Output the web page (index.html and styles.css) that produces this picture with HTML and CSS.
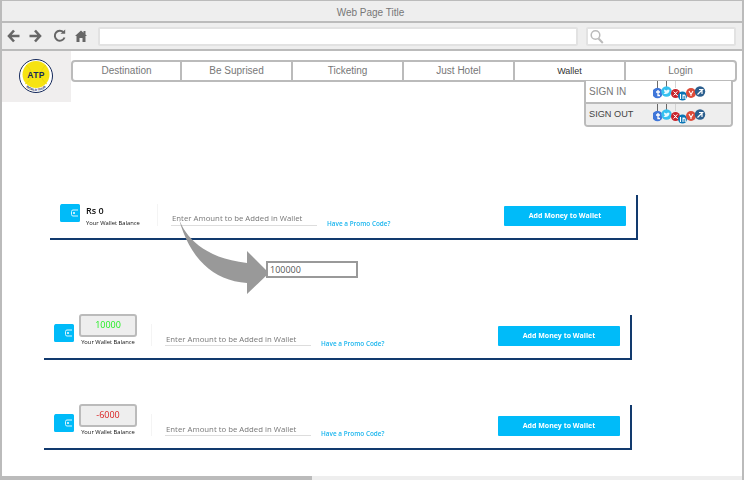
FILE: index.html
```html
<!DOCTYPE html>
<html lang="en">
<head>
<meta charset="utf-8">
<title>Web Page Title</title>
<link rel="stylesheet" href="styles.css">
</head>
<body>
<svg class="defs" width="0" height="0" aria-hidden="true">
  <defs>
    <symbol id="wallet" viewBox="0 0 20 18">
      <path d="M1.500 0H18.500A1.500 1.500 0 0 1 20 1.500V16.500A1.500 1.500 0 0 1 18.500 18H1.500A1.500 1.500 0 0 1 0 16.500V3A3 3 0 0 1 1.500 0Z" fill="#00bbf9"/>
      <path d="M18 6H13A1.500 1.500 0 0 0 11.500 7.500V10.500A1.500 1.500 0 0 0 13 12H18" fill="none" stroke="#d8f5ff" stroke-width="1"/>
      <circle cx="14" cy="9" r="1" fill="#fff"/>
    </symbol>
    <symbol id="social" viewBox="0 0 54 24">
      <path d="M4.500 0V8M13.500 0V7" stroke="#444" stroke-width=".8"/>
      <path d="M22.500 0V7" stroke="#ccc" stroke-width=".8"/>
      <circle cx="4.500" cy="12" r="5.200" fill="#3f76d9"/>
      <path d="M5 9V14.500H7M3 11H7" stroke="#fff" stroke-width="1.300" fill="none"/>
      <circle cx="13.500" cy="10.500" r="5.200" fill="#35c1f0"/>
      <path d="M10.500 12.500C13 14 16.500 12.500 16.500 9L15 8.500L13.500 9.500L11 8.500C11 10 11.500 11 12 11.500Z" fill="#e8f9ff"/>
      <circle cx="22.500" cy="12.500" r="4.500" fill="#c9252d"/>
      <path d="M20.500 10.500L24.500 14.500M24.500 10.500L22 12.500L24.500 14.500M20.500 14.500L23 12" stroke="#fff" stroke-width="1" fill="none"/>
      <circle cx="29.500" cy="15" r="4.500" fill="#0a75b5"/>
      <path d="M27.500 13V18M30 18V13.500M30 15C31 13.500 32.200 14 32.200 15.500V18" stroke="#fff" stroke-width="1.100" fill="none"/>
      <circle cx="38" cy="12" r="5" fill="#dd4b39"/>
      <path d="M36 10L38 13.500L40 10M38 13.500V15" stroke="#fff" stroke-width="1.100" fill="none"/>
      <circle cx="47" cy="10.500" r="5.200" fill="#2c5f8e"/>
      <path d="M44.500 13.500L49.500 8.500H46M49 8.500V13" stroke="#fff" stroke-width="1.200" fill="none"/>
    </symbol>
  </defs>
</svg>

<div class="frame">
  <header class="titlebar">Web Page Title</header>

  <div class="toolbar">
    <svg class="tool-icons" width="82" height="16" viewBox="0 0 82 16" aria-hidden="true">
      <path d="M7 2.500L2 8L7 13.500M2.500 8H12.500" fill="none" stroke="#666" stroke-width="2.600"/>
      <path d="M28 2.500L33 8L28 13.500M32.500 8H22.500" fill="none" stroke="#666" stroke-width="2.600"/>
      <path d="M56.500 4.300A5 5 0 1 0 57.500 9.500" fill="none" stroke="#666" stroke-width="2"/>
      <path d="M53.500 5.800H58.200V1.500Z" fill="#666"/>
      <path d="M68 8L74 2.500L76.500 4.800V3H78.500V6.600L80 8H78.500V14H75.500V10H72.500V14H69.500V8Z" fill="#666"/>
    </svg>
    <div class="address"></div>
    <div class="search">
      <svg width="14" height="15" viewBox="0 0 14 15" aria-hidden="true">
        <circle cx="5.500" cy="6" r="4.300" fill="none" stroke="#bbb" stroke-width="1.500"/>
        <path d="M8.500 9.500L12.800 14" stroke="#bbb" stroke-width="2"/>
      </svg>
    </div>
  </div>

  <div class="header">
    <div class="logo">
      <svg width="36" height="36" viewBox="0 0 36 36" role="img" aria-label="ATP World Tour">
        <circle cx="18" cy="18" r="16.500" fill="#fff" stroke="#14285a" stroke-width="1"/>
        <circle cx="18" cy="16.500" r="13.500" fill="#f6e312"/>
        <path d="M8 7C15 12 15 22 7 26M28 7C21 12 22 22 29 26" fill="none" stroke="#e5d40e" stroke-width=".8"/>
        <text x="18" y="20" class="logo-mark" text-anchor="middle">ATP</text>
        <path id="logo-arc" d="M6.500 27C12 35 24 35 29.500 27" fill="none"/>
        <text class="logo-sub"><textPath href="#logo-arc" startOffset="50%" text-anchor="middle">WORLD TOUR</textPath></text>
      </svg>
    </div>
    <nav class="nav">
      <a class="nav-item">Destination</a>
      <a class="nav-item">Be Suprised</a>
      <a class="nav-item">Ticketing</a>
      <a class="nav-item">Just Hotel</a>
      <a class="nav-item nav-item--active">Wallet</a>
      <a class="nav-item">Login</a>
    </nav>
    <div class="menu">
      <div class="menu-row">
        <span class="menu-label">SIGN IN</span>
        <svg class="menu-social" width="54" height="24" aria-hidden="true"><use href="#social"/></svg>
      </div>
      <div class="menu-row menu-row--out">
        <span class="menu-label">SIGN OUT</span>
        <svg class="menu-social" width="54" height="24" aria-hidden="true"><use href="#social"/></svg>
      </div>
    </div>
  </div>

  <main class="main">
    <section class="card card--first">
      <div class="balance">
        <svg class="wallet-icon" width="20" height="18" aria-hidden="true"><use href="#wallet"/></svg>
        <div class="balance-plain">
          <div class="rs">Rs 0</div>
          <div class="balance-label">Your Wallet Balance</div>
        </div>
      </div>
      <div class="amount">Enter Amount to be Added in Wallet</div>
      <a class="promo">Have a Promo Code?</a>
      <button class="add">Add Money to Wallet</button>
    </section>

    <section class="card card--second">
      <div class="balance">
        <svg class="wallet-icon" width="20" height="18" aria-hidden="true"><use href="#wallet"/></svg>
        <div class="balance-boxed">
          <div class="value value--pos">10000</div>
          <div class="balance-label balance-label--center">Your Wallet Balance</div>
        </div>
      </div>
      <div class="amount amount--low">Enter Amount to be Added in Wallet</div>
      <a class="promo">Have a Promo Code?</a>
      <button class="add">Add Money to Wallet</button>
    </section>

    <section class="card card--third">
      <div class="balance">
        <svg class="wallet-icon" width="20" height="18" aria-hidden="true"><use href="#wallet"/></svg>
        <div class="balance-boxed">
          <div class="value value--neg">-6000</div>
          <div class="balance-label balance-label--center">Your Wallet Balance</div>
        </div>
      </div>
      <div class="amount amount--low">Enter Amount to be Added in Wallet</div>
      <a class="promo">Have a Promo Code?</a>
      <button class="add">Add Money to Wallet</button>
    </section>

    <svg class="arrow" width="92" height="76" viewBox="0 0 92 76" aria-hidden="true">
      <path d="M0 0C6 17 24 39 68 44V32L90 54L68 75V64C34 62 10 38 0 0Z" fill="#999"/>
    </svg>
    <div class="entered">100000</div>
  </main>

  <div class="scrollbar"><div class="scroll-thumb"></div></div>
</div>
</body>
</html>
```
FILE: styles.css
```css
* { box-sizing: border-box; }
html, body { margin: 0; padding: 0; }
body { width: 744px; height: 480px; overflow: hidden; background: #fff; font-family: "Liberation Sans", Arial, sans-serif; }
.defs { position: absolute; }

.frame {
  position: relative;
  width: 744px;
  height: 480px;
  display: flex;
  flex-direction: column;
  border: 1px solid #bbb;
  border-width: 1px 2px 0 2px;
  overflow: hidden;
}

.titlebar {
  height: 22px;
  flex: none;
  background: #eee;
  border-bottom: 2px solid #bbb;
  text-align: center;
  font-size: 10px;
  line-height: 23px;
  color: #777;
  padding-right: 3px;
}

.toolbar {
  height: 28px;
  flex: none;
  display: flex;
  align-items: flex-start;
  background: #eee;
  border-bottom: 2px solid #bbb;
  padding: 4px 6px 0 5px;
}
.tool-icons { margin-top: 1px; flex: none; }
.address, .search {
  height: 19px;
  background: #fff;
  border: 2px solid #e2e2e2;
  border-radius: 2px;
}
.address { width: 480px; margin-left: 9px; }
.search { width: 150px; margin-left: 8px; padding: 0 0 0 2px; display: flex; align-items: center; }

.header { position: relative; height: 52px; flex: none; display: flex; align-items: flex-start; }
.logo {
  width: 69px;
  height: 51px;
  background: #f0eeee;
  display: flex;
  align-items: center;
  justify-content: center;
  padding: 0 2px 1px 0;
  flex: none;
}
.logo-mark { font: bold 8.500px "Liberation Sans", Arial, sans-serif; fill: #14285a; letter-spacing: .3px; }
.logo-sub { font: bold 3.200px "Liberation Sans", Arial, sans-serif; fill: #14285a; }

.nav {
  display: flex;
  width: 666px;
  height: 22px;
  margin-top: 9px;
  background: #fff;
  border: 2px solid #bbb;
  border-radius: 4px;
}
.nav-item {
  flex: none;
  width: 111px;
  font-size: 10px;
  line-height: 18px;
  text-align: center;
  color: #777;
  border-left: 2px solid #bbb;
}
.nav-item:first-child { width: 107px; border-left: 0; }
.nav-item:last-child { flex: 1; }
.nav-item--active { font-size: 9px; color: #333; padding-bottom: 1px; }

.menu {
  position: absolute;
  left: 582px;
  top: 30px;
  width: 149px;
  height: 46px;
  background: #fff;
  border: 2px solid #bbb;
  border-top: 0;
  border-radius: 0 0 4px 4px;
  overflow: hidden;
  z-index: 2;
}
.menu-row {
  position: relative;
  height: 21px;
  display: flex;
  align-items: center;
  padding-left: 3px;
  font-size: 10px;
  color: #777;
}
.menu-row--out { height: 23px; padding-bottom: 2px; background: #eee; border-top: 2px solid #bbb; font-size: 9.200px; color: #444; }
.menu-social { position: absolute; left: 67px; top: 0; }

.main { position: relative; flex: 1; filter: blur(.4px); }

.card {
  display: flex;
  align-items: flex-start;
  width: 588px;
  height: 45px;
  padding: 0 10px 0 10px;
  border-right: 2px solid #123a6e;
  border-bottom: 2px solid #123a6e;
}
.card--first { margin: 92px 0 0 48px; }
.card--second { margin: 75px 0 0 42px; }
.card--third { margin: 45px 0 0 42px; }

.balance {
  width: 98px;
  height: 22px;
  margin-top: 9px;
  display: flex;
  flex: none;
  border-right: 1px solid #f4f4f4;
}
.wallet-icon { flex: none; }
.balance-plain { margin-left: 6px; padding-top: 1px; }
.rs { font: 600 9px/12px "Open Sans", sans-serif; color: #111; }
.balance-label { margin-top: 3px; font: 5.800px/7px "Open Sans", sans-serif; color: #111; white-space: nowrap; }

.balance-boxed { margin: -10px 0 0 5px; width: 58px; }
.value {
  height: 23px;
  background: #eee;
  border: 2px solid #bbb;
  border-radius: 3px;
  text-align: center;
  font: 9px/18px "Open Sans", sans-serif;
}
.value--pos { color: #22ee22; }
.value--neg { color: #d92020; }
.balance-label--center { margin-top: 2px; text-align: center; }

.amount {
  width: 146px;
  height: 18px;
  margin: 13px 0 0 13px;
  padding: 5px 0 0 1px;
  flex: none;
  border-bottom: 1px solid #ddd;
  font: 7.800px/10px "Open Sans", sans-serif;
  color: #777;
  white-space: nowrap;
}
.amount--low { padding-top: 6px; }
.promo {
  margin: 25px 0 0 10px;
  font: 600 6.400px/8px "Open Sans", sans-serif;
  color: #19b5ee;
  white-space: nowrap;
}
.add {
  width: 122px;
  height: 20px;
  margin: 11px 0 0 auto;
  padding: 0;
  background: #00bbf9;
  border: 0;
  border-radius: 1px;
  color: #fff;
  font: 700 7px/20px "Open Sans", sans-serif;
}

.arrow { position: absolute; left: 177px; top: 116px; }
.entered {
  position: absolute;
  left: 264px;
  top: 158px;
  width: 92px;
  height: 17px;
  background: #fff;
  border: 2px solid #999;
  padding-left: 2px;
  font: 9px/13px "Open Sans", sans-serif;
  color: #555;
}

.scrollbar { height: 4px; flex: none; background: #eee; margin: 0 -2px; }
.scroll-thumb { width: 312px; height: 100%; background: #bbb; }
```
